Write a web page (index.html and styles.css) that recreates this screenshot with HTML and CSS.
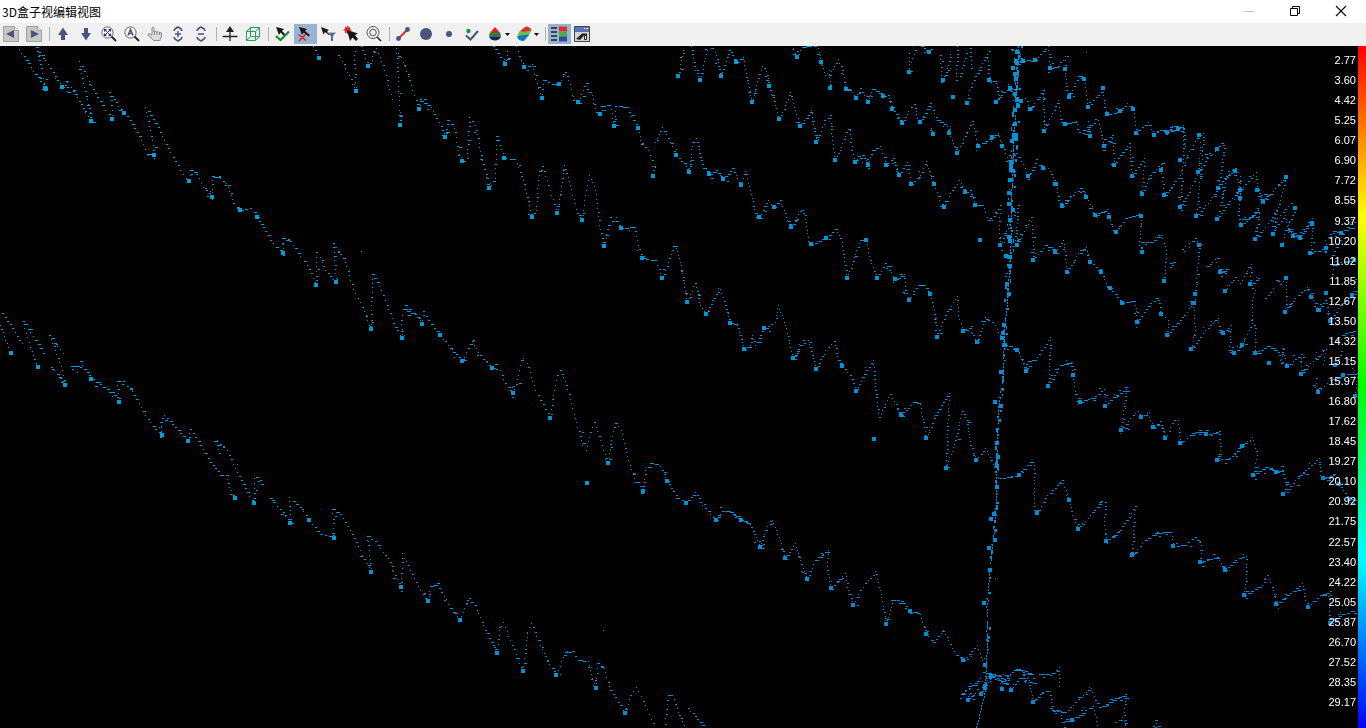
FILE: index.html
```html
<!DOCTYPE html>
<html lang="zh-CN">
<head>
  <meta charset="UTF-8" />
  <meta name="viewport" content="width=device-width, initial-scale=1.0"/>
  <title>3D盒子视编辑视图</title>
  <link rel="stylesheet" href="styles.css">
</head>
<body>

  <header class="titlebar">
    <h1>3D盒子视编辑视图</h1>
    <div class="window-buttons">
      <button type="button" aria-label="最小化" disabled>
        <svg viewBox="0 0 12 12"><path d="M1 6.500h10" stroke="#c4c4c4"/></svg>
      </button>
      <button type="button" aria-label="还原">
        <svg viewBox="0 0 12 12"><path d="M1.500 3.500h7v7h-7zM3.500 3.500v-2h7v7h-2" fill="none" stroke="#000"/></svg>
      </button>
      <button type="button" aria-label="关闭">
        <svg viewBox="0 0 12 12"><path d="M1 1l10 10M11 1L1 11" stroke="#000" stroke-width="1.100"/></svg>
      </button>
    </div>
  </header>

  <nav class="toolbar" aria-label="工具栏">
    <button type="button" aria-label="上一个">
      <svg viewBox="0 0 16 16"><path d="M.5.500h11l4 4v11H.5z" fill="#c6c6c6" stroke="#a2a2a2"/><path d="M11.500.500v4h4" fill="#eee" stroke="#a2a2a2"/><path d="M11 4v8L3 8z" fill="#46557c"/></svg>
    </button>
    <button type="button" aria-label="下一个">
      <svg viewBox="0 0 16 16"><path d="M.5.500h11l4 4v11H.5z" fill="#c6c6c6" stroke="#a2a2a2"/><path d="M11.500.500v4h4" fill="#eee" stroke="#a2a2a2"/><path d="M5 4v8l8-4z" fill="#46557c"/></svg>
    </button>
    <span class="separator"></span>
    <button type="button" aria-label="向上">
      <svg viewBox="0 0 16 16"><path d="M8 1.500L13 9h-3v5H6V9H3z" fill="#46557c"/></svg>
    </button>
    <button type="button" aria-label="向下">
      <svg viewBox="0 0 16 16"><path d="M8 14.500L13 7h-3V2H6v5H3z" fill="#46557c"/></svg>
    </button>
    <button type="button" aria-label="全部显示">
      <svg viewBox="0 0 16 16"><circle cx="6.500" cy="6.500" r="5.600" fill="#f6f6f6" stroke="#666"/><path d="M10.500 10.500l4.500 4.500" stroke="#222" stroke-width="1.800"/><path d="M4 4l5 5M9 4L4 9" stroke="#2a2a80"/><path d="M3 3h3L3 6zM10 3v3L7 3zM3 10V7l3 3zM10 10H7l3-3z" fill="#2a2a80"/></svg>
    </button>
    <button type="button" aria-label="自动缩放">
      <svg viewBox="0 0 16 16"><circle cx="6.500" cy="6.500" r="5.600" fill="#f6f6f6" stroke="#666"/><path d="M10.500 10.500l4.500 4.500" stroke="#222" stroke-width="1.800"/><path d="M4 9.500l2.500-6 2.500 6M5 7.500h3" fill="none" stroke="#46557c" stroke-width="1.500"/></svg>
    </button>
    <button type="button" aria-label="平移">
      <svg viewBox="0 0 16 16"><path d="M5 9V2.500Q5 1 6 1t1 1.500V6l1-1 1.500 1L11 5.500 12 6.500l2.500.5v4L13 13.500v1H6.500L5 12.500 1 9Q1 7 3 8z" fill="#dcdcdc" stroke="#8a8a8a"/><path d="M7.500 6v3M10 6v3M12.500 7v2" stroke="#888"/></svg>
    </button>
    <button type="button" aria-label="放大">
      <svg viewBox="0 0 16 16"><path d="M4 5q0-2 4-4q4 2 4 4M4 11q0 2 4 4q4-2 4-4M5 8h6M8 5v6" fill="none" stroke="#46557c" stroke-width="1.500"/></svg>
    </button>
    <button type="button" aria-label="缩小">
      <svg viewBox="0 0 16 16"><path d="M4 5q0-2 4-4q4 2 4 4M4 11q0 2 4 4q4-2 4-4M5 8h6" fill="none" stroke="#46557c" stroke-width="1.500"/></svg>
    </button>
    <span class="separator"></span>
    <button type="button" aria-label="移动剖面">
      <svg viewBox="0 0 16 16"><path d="M8 4v11M.5 10.500h15" stroke="#222" stroke-width="1.300"/><path d="M8 0l4 6H4z" fill="#222"/></svg>
    </button>
    <button type="button" aria-label="立方体">
      <svg viewBox="0 0 16 16"><path d="M1.500 5.500h9v9h-9zM5.500 1.500h9v9h-9zM1.500 5.500l4-4M10.500 5.500l4-4M10.500 14.500l4-4M1.500 14.500l4-4" fill="none" stroke="#23a35a"/></svg>
    </button>
    <span class="separator"></span>
    <button type="button" aria-label="接受点">
      <svg viewBox="0 0 16 16"><path d="M2 1l8 2-2 2 4 4-1.500 1.500-4-4L5 9z" fill="#161616"/><path d="M2 10l4.500 4L15 5.500" fill="none" stroke="#1f8a35" stroke-width="2.200"/></svg>
    </button>
    <button type="button" class="active" aria-label="拒绝点" aria-pressed="true">
      <svg viewBox="0 0 16 16"><path d="M2 1l8 2-2 2 5 4-1.500 1.500-5-4L5 9z" fill="#161616"/><path d="M1.500 8.500l7.500 6M9 8l-7 7" stroke="#d8262c" stroke-width="1.600"/></svg>
    </button>
    <button type="button" aria-label="过滤选择">
      <svg viewBox="0 0 16 16"><path d="M1 1l8 3-2 1 3 3-1 1-4-3-1.500 2.500z" fill="#161616"/><path d="M7 6.500h9L13 10v5h-2v-5z" fill="#5a6a8c"/><path d="M7.500 6.500h8" stroke="#b7c0d2"/></svg>
    </button>
    <button type="button" aria-label="选择点">
      <svg viewBox="0 0 16 16"><circle cx="4.500" cy="4" r="3" fill="#e22a2a"/><path d="M4.500 0v8M.5 4h8M2 1l5 6M7 1L2 7" stroke="#e22a2a"/><path d="M4 4l11 3.500-3 1.500 3 4-2 2-3.500-3.500L7 15z" fill="#161616"/></svg>
    </button>
    <button type="button" aria-label="查询">
      <svg viewBox="0 0 16 16"><circle cx="7" cy="6.500" r="6" fill="none" stroke="#555"/><circle cx="7" cy="6.500" r="3.300" fill="none" stroke="#555"/><path d="M11 11l4 4" stroke="#222" stroke-width="1.600"/></svg>
    </button>
    <span class="separator"></span>
    <button type="button" aria-label="测线">
      <svg viewBox="0 0 16 16"><path d="M3.500 12.500l9-9" stroke="#e02626" stroke-width="1.800"/><circle cx="3.500" cy="12.500" r="2.400" fill="#46557c"/><circle cx="12.500" cy="3.500" r="2.400" fill="#46557c"/></svg>
    </button>
    <button type="button" aria-label="大点">
      <svg viewBox="0 0 16 16"><circle cx="8" cy="8" r="6" fill="#46557c"/></svg>
    </button>
    <button type="button" aria-label="小点">
      <svg viewBox="0 0 16 16"><circle cx="8" cy="8" r="3" fill="#46557c"/></svg>
    </button>
    <button type="button" aria-label="已接受的点">
      <svg viewBox="0 0 16 16"><circle cx="4.500" cy="5" r="2.200" fill="#0f9c43"/><path d="M2 9.500l4.500 4L14 5" fill="none" stroke="#46557c" stroke-width="2"/></svg>
    </button>
    <button type="button" class="dropdown" aria-label="着色方式">
      <svg viewBox="0 0 16 16"><path d="M8 1L2.800 7h10.400z" fill="#dc2323"/><path d="M2.800 7Q2 8.500 2.200 11h11.600Q14 8.500 13.200 7z" fill="#0c8a43"/><path d="M2.200 11Q4 14.500 8 14.500t5.800-3.500z" fill="#2b1770"/></svg>
      <svg class="caret" viewBox="0 0 5 3"><path d="M0 0h5L2.500 3z"/></svg>
    </button>
    <button type="button" class="dropdown" aria-label="曲面">
      <svg viewBox="0 0 16 16"><path d="M5 4l5-3.500Q14 .5 15.500 4l-1 2H4z" fill="#dc3030"/><path d="M3.500 5Q8 7 15.500 4l-3 6Q7 8 1 11z" fill="#6cc04a"/><path d="M1 10.500Q7 8 13 9l-5 6Q2 15 1 10.500z" fill="#1179bd"/></svg>
      <svg class="caret" viewBox="0 0 5 3"><path d="M0 0h5L2.500 3z"/></svg>
    </button>
    <span class="separator"></span>
    <button type="button" class="active" aria-label="显示色标" aria-pressed="true">
      <svg viewBox="0 0 16 16"><path d="M0 2h6M0 6h6M0 10h6M0 14h6" stroke="#1d1d1d" stroke-width="1.600"/><path d="M8 .5h8v5H8z" fill="#dc3030"/><path d="M8 5.500h8v5H8z" fill="#4cae3c"/><path d="M8 10.500h8v5H8z" fill="#334a9c"/></svg>
    </button>
    <button type="button" aria-label="视图设置">
      <svg viewBox="0 0 16 16"><path d="M.5.500h15v15H.5z" fill="#d4d4d4" stroke="#444"/><path d="M1 1h14v5H1z" fill="#5d72b5"/><path d="M10 2.500h1M12 2.500h2" stroke="#fff"/><path d="M2 13l6-5.500h5v2h-3l-4 4.500z" fill="#222"/><path d="M10.500 9.500h2v4h-2z" fill="#fff" stroke="#222"/></svg>
    </button>
  </nav>

  <main class="view">
    <canvas id="cloud" aria-label="点云"></canvas>
    <ol class="depths" id="depths"></ol>
    <div class="color-scale"></div>
  </main>

  <script src="cloud.js"></script>
</body>
</html>
```

FILE: styles.css
```css
* {
  box-sizing: border-box;
}

body {
  margin: 0;
  height: 100vh;
  display: flex;
  flex-direction: column;
  overflow: hidden;
  background-color: #000;
  font-family: 'Liberation Sans', 'Noto Sans CJK SC', sans-serif;
  font-size: 11px;
}

button {
  border: none;
  padding: 0;
  background: none;
}

.titlebar {
  height: 23px;
  flex: none;
  display: flex;
  justify-content: space-between;
  align-items: center;
  padding: 0 2px;
  background-color: #fff;
}

.titlebar h1 {
  margin: 0;
  color: #000;
  font-family: 'Noto Sans CJK SC', sans-serif;
  font-size: 12px;
  font-weight: normal;
  line-height: 20px;
}

.window-buttons {
  display: flex;
  height: 22px;
}

.window-buttons button {
  width: 46px;
  padding-bottom: 2px;
  display: flex;
  justify-content: center;
  align-items: center;
}

.window-buttons svg {
  width: 12px;
  height: 12px;
}

.toolbar {
  height: 23px;
  flex: none;
  display: flex;
  background-color: #f0f0f0;
}

.toolbar button {
  width: 23px;
  height: 20px;
  margin-top: 1px;
  padding-right: 1px;
  display: flex;
  justify-content: center;
  align-items: center;
}

.toolbar svg {
  width: 16px;
  height: 16px;
}

.toolbar .active {
  background-color: #99b4d1;
}

.toolbar .dropdown {
  width: 29px;
  gap: 2px;
}

.toolbar .caret {
  width: 5px;
  height: 3px;
}

.separator {
  width: 1px;
  height: 14px;
  margin: 4px 2px 0 3px;
  background-color: #b4b4b4;
}

.view {
  flex: 1;
  min-height: 0;
  display: grid;
  grid-template-columns: 1fr auto 8px;
  grid-template-rows: 100%;
}

#cloud {
  grid-area: 1 / 1 / 2 / 4;
  width: 100%;
  height: 100%;
}

/* the labels and the scale share the grid row with the canvas */
.depths {
  grid-area: 1 / 2;
  margin: 0;
  padding: 4px 2px 16px 0;
  list-style: none;
  display: flex;
  flex-direction: column;
  justify-content: space-between;
  color: #fff;
  text-align: right;
  line-height: 20px;
  z-index: 1;
}

.color-scale {
  grid-area: 1 / 3;
  background: linear-gradient(#f00, #ff0, #0f0, #0ff, #00f);
  z-index: 1;
}
```

FILE: cloud.js
```js
// Sounding profiles, "x,y" per vertex. A * marks a picked sounding.
const profiles = [
  '2,313 10,324 17,336 24,346',
  '0,325 4,336 8,347 11,353*',
  '38,367* 34,359 29,342 24,328 23,321 30,332 40,348 46,357',
  '51,367 57,374 65,385* 62,370 55,350 49,335 57,346 66,356',
  '71,366 80,367 77,372 80,361 91,379* 100,384 110,392 117,397 119,402* 117,381 127,386 132,391 145,415 155,429 162,435* 160,422 164,415 175,427 183,436 188,441* 190,429 200,445 210,462 220,475 224,477',
  '235,498* 229,487 225,470',
  '217,440 219,453 216,441 227,450 235,468 247,492 254,503* 254,478 265,487',
  '270,498 280,509 290,523* 289,497 300,507 309,520* 320,534 334,538* 332,509 340,514 350,530 360,550 371,572* 369,555 367,536 375,541 390,562 395,575 401,587* 402,553 410,570 420,590 428,601* 430,586 437,583 450,608 460,620* 467,600 475,605 485,630 497,653* 499,630 503,622 512,645 523,671* 527,632 531,623 540,645 547,660 556,675* 565,652 572,651 578,660 588,661 592,678 596,688* 597,663 604,668 610,690 625,713* 630,695 636,687 645,705 655,728',
  '664,728 668,695 672,695 678,712 685,728', '688,708 695,716 704,728',

  '19,49 26,60 35,74 45,88* 41,68 36,47 45,60 55,76 62,87* 67,82 67,91 71,87 77,97 85,112 91,121* 89,108 82,78 79,61 84,71 89,81 97,97 105,110 112,119* 111,100 109,92 118,106 124,113* 130,120 141,140 147,154 154,155* 152,140 145,107 153,119 162,136 170,152 180,170 189,181* 190,170 197,174 203,187 212,197* 212,176 220,178 226,183 234,203 240,210* 250,208 257,217* 263,227 270,240 276,247 283,253* 282,238 290,241 300,256 307,265 313,278 316,285* 316,252 320,257 325,270 330,276 336,282* 333,243 345,262 353,289 362,307 371,329* 371,310 372,274 379,286 385,300 395,327 402,338* 401,320 403,309 415,314 422,324* 423,311 431,324 440,335* 450,348 462,361* 468,348 472,341 480,355 492,368* 500,370 505,383 513,393* 518,375 521,360 527,363 535,390 540,400 550,418* 553,395 557,375 560,370 566,385 575,418 582,445 586,450 590,432 594,422 600,440 608,463* 611,440 615,423 621,430 628,460 636,482 643,491* 645,470 650,463 660,466 667,481* 673,491 678,498 686,503* 695,492 702,505 716,520* 722,511 730,512 741,520* 750,524 760,547* 765,530 772,520 780,540 785,558* 795,543 800,560 807,579* 815,560 828,550 827,570 831,588* 845,573 848,590 853,605* 860,590 875,571 880,590 886,624* 893,600 901,601 910,611* 920,614 926,634* 933,642 943,630 952,648 956,655 963,660* 977,645 982,660 985,665*',

  '313,46 319,58*', '340,57 347,72 356,91* 354,60 355,46', '361,46 368,66* 372,60 373,46', '376,48 383,65 388,85 393,103',
  '400,125* 399,100 396,48 405,66 412,90 416,100 419,109* 420,101 431,107 436,118 441,126 445,137* 447,120 454,128 458,150 462,161* 467,158 469,117 475,125 482,160 489,188* 495,178 496,140 498,140 504,158* 515,159 523,180 530,210 532,217* 536,210 538,180 542,166 550,190 557,213* 560,195 564,165 570,185 577,213 582,220* 585,195 589,175 595,190 599,225 604,246* 608,225 616,217 621,228* 634,227 638,245 642,258* 655,260 662,278* 668,262 673,246 676,248 680,262 687,302* 695,283 700,305 706,314* 712,300 720,289 725,305 730,323* 737,325 744,349* 750,345 752,335 755,345 764,328* 775,322 778,305 785,325 793,358* 800,345 808,340 816,369* 825,350 834,341 838,360 842,366* 850,375 856,391* 862,377 873,360 875,390 879,417 890,394 901,415* 913,402 920,404 926,438* 935,415 949,393 947,430 946,468* 955,440 962,411 967,420 970,445 976,460* 985,448 991,460 997,475',
  '1000,478 1010,477 1019,475* 1030,462 1034,465 1034,510 1037,513* 1047,495 1062,480 1069,500* 1072,515 1078,529* 1090,515 1101,501 1105,502 1104,525 1106,541* 1120,530 1135,506 1133,530 1132,555* 1145,540 1155,533 1171,532 1173,546* 1185,545 1195,537 1201,545 1200,562* 1217,557 1225,570* 1235,560 1246,556 1246,578 1244,595* 1262,585 1267,575 1273,590 1276,604* 1290,593 1302,583 1305,600 1308,607* 1320,595 1330,591 1329,615 1330,623* 1342,614 1351,611 1357,615',

  '493,46 500,57 505,64* 508,46', '516,46 521,60 524,67* 532,64 534,74 538,88 542,98* 543,80 552,84 559,84* 565,72 571,89 573,100 578,102* 584,86 592,95 596,112 600,114* 603,106 610,105 614,126* 615,106 627,107 633,120 638,128* 641,144 648,150 652,160 653,176*',
  '655,142 662,127 670,142 676,155* 684,163 689,172* 692,142 696,138 702,164 709,174* 716,170 723,179* 732,168 741,185* 745,171 750,190 755,213 759,217* 768,200 774,207* 780,200 787,220 791,227* 800,211 805,215 808,241 811,244* 826,238* 835,229 841,238 845,265 847,278* 860,240 866,240* 870,260 877,278* 885,263 895,279* 904,274 905,290 909,300* 918,285 924,285 930,294* 934,310 937,337* 945,315 957,296 958,315 963,331* 969,328 977,342* 985,317 995,325 1005,345* 1017,350* 1022,360 1026,371* 1028,361 1035,360 1050,337 1049,370 1048,386* 1060,365 1071,362 1073,375* 1075,394 1080,402* 1095,396 1104,389 1105,406* 1113,397 1126,389 1123,410 1121,430* 1130,418 1138,411 1141,417* 1147,413 1153,427* 1160,421 1165,438* 1174,420 1178,420 1180,443* 1190,435 1199,430 1206,434* 1219,431 1220,450 1217,460* 1229,458 1242,446* 1252,437 1257,455 1253,475* 1265,467 1276,472* 1282,470 1286,485 1283,494* 1300,475 1319,458 1320,475 1323,478* 1333,475 1339,484* 1349,499* 1357,501',

  '678,76* 681,60 684,46', '691,46 695,70 700,80* 705,58 708,46', '711,48 715,52 721,76* 729,50 732,55 736,62* 743,57 747,80 752,102* 758,78 762,66 766,71 769,86* 775,105 779,119* 785,105 790,92 795,110 800,126* 808,115 811,110 815,135 816,142* 825,120 830,115 832,140 835,160* 840,150 846,132 850,130 852,150 855,162* 862,155 868,165* 872,150 880,146 886,165* 893,158 899,175* 907,162 911,184* 920,175 926,161 930,175 934,184* 939,200 944,207* 952,190 959,180 965,192* 970,190 975,205* 982,205 988,220 992,220 1000,205 999,225 1000,245* 1008,228 1018,205 1016,230 1017,245* 1031,217 1033,245 1033,260* 1045,245 1055,252* 1063,240 1065,255 1067,272* 1080,250 1086,247 1090,262* 1101,272* 1107,287 1110,288* 1122,303* 1135,301 1137,322* 1150,303 1158,300 1161,314* 1168,320 1167,335* 1180,320 1193,303* 1195,330 1191,349* 1205,330 1218,318 1219,330 1223,333* 1231,325 1229,350 1234,353* 1242,345* 1252,323 1255,328 1255,353* 1267,346 1278,352 1281,363 1282,348 1287,366* 1301,354 1301,374* 1315,358 1326,349 1322,368',
  '1316,378 1315,387 1318,392* 1330,380 1343,375* 1357,373 1355,396*',

  '793,49 797,57* 802,47 814,46 818,48 821,62* 825,75 829,70 830,88*', '829,75 838,59 842,70 846,89* 852,92 856,98* 860,88 868,102* 872,89 883,96* 888,95 892,109* 902,123* 908,111 914,104 918,121 920,122* 930,103 937,120 947,126 949,133* 957,153* 965,136 972,121 978,146* 992,137* 998,133 1002,146* 1008,160 1016,153 1023,164 1028,176* 1035,163 1043,168* 1048,168 1054,180 1056,184* 1058,200 1062,206* 1070,197 1080,188 1086,197* 1095,215* 1107,209 1109,217* 1113,230 1116,232* 1125,218 1139,213 1141,216* 1139,245 1142,252*',
  '931,128 933,134*', '1141,242 1150,242 1161,235 1166,250 1164,281*', '1170,263 1176,260', '1182,249 1195,238 1199,245* 1197,270 1195,294* 1194,303*', '1207,266 1215,259 1220,272* 1229,268', '1225,291* 1235,277 1240,283 1251,264 1250,284*', '1265,298 1275,285', '1276,280 1280,284 1286,278* 1286,300 1285,312* 1295,298 1307,287 1311,297* 1319,310* 1325,300 1330,321* 1340,305 1352,295* 1356,275', '1250,285 1261,275', '1252,323 1252,300 1256,286',

  '909,72* 909,50', '911,62 916,46', '921,46 929,52* 933,46', '940,55 941,79 943,80* 948,65 951,50', '957,46 956,80 960,76 967,50', '970,48 971,72',
  '967,103* 969,90 977,73 987,54 989,80* 996,83 998,98 996,102* 1003,92 1010,88* 1020,90',
  '1008,84 1015,100 1021,101* 1025,98 1030,109* 1043,90 1044,131* 1051,116 1058,100 1061,122 1065,124* 1076,121 1079,132 1090,136* 1088,118',
  '1083,130 1090,125 1098,120 1104,146* 1112,135 1114,165* 1120,155 1129,143 1132,176* 1144,158 1142,194* 1150,175 1161,164 1161,170* 1164,195* 1180,175 1187,155 1199,135* 1203,133 1202,155 1196,216* 1210,200 1218,188* 1224,178 1235,171* 1240,190 1238,215 1241,225* 1249,218 1258,210 1259,216 1255,239* 1270,220 1276,210 1273,234*',

  '1012,50 1023,61* 1035,60* 1048,46 1050,68* 1058,66 1065,56 1065,69* 1066,90 1069,97* 1078,76 1084,79* 1088,107* 1103,88* 1104,107 1107,114* 1120,111* 1127,103 1133,109* 1136,133* 1148,122 1154,135* 1160,130 1167,132* 1178,129* 1183,125 1183,155 1180,207* 1192,185 1198,172* 1200,150 1199,135', '1170,127 1177,126 1183,128 1185,150',
  '1198,172 1207,158 1217,149* 1221,143 1224,148 1218,188*', '1217,219* 1229,201 1240,190* 1256,172 1257,190* 1263,201* 1275,188 1286,177* 1280,200 1272,225', '1217,180 1224,190 1220,205 1226,176 1235,168 1240,176 1240,198*', '1245,219 1259,210', '1264,194 1258,196 1262,202 1269,196',
  '1273,234* 1277,218 1291,203 1295,208* 1288,225 1293,236* 1300,238* 1312,218 1312,224* 1311,245 1310,253* 1326,248* 1325,240 1333,231 1341,233* 1350,224 1357,219', '1282,245* 1285,230 1300,236 1310,219', '1274,230 1285,215 1289,236', '1332,278 1333,265 1340,262 1354,260*', '1330,258 1345,230 1357,226', '1335,340 1345,333 1357,330', '1335,365* 1343,348', '1350,360 1355,380',

  '960,698 965,690 970,683 968,700* 975,693 978,685', '962,693 972,685 980,678 985,688* 991,676* 1003,674 1001,686 1002,689*', '981,694* 988,676 1008,684 1011,690* 1019,678 1028,677 1033,702* 1042,692 1050,691 1052,710 1060,711 1062,722 1072,720* 1085,710 1093,706 1098,728', '1005,680 1014,670 1020,669 1023,674 1032,674 1033,683 1024,681 1030,676', '1039,674 1050,675 1059,667 1059,690', '1053,711 1065,712 1080,697 1091,688 1095,700 1099,707 1112,700 1125,694 1124,715 1126,728', '983,672 995,675 1004,679 1016,669 1030,674', '1115,722 1122,717 1127,728', '1149,728 1156,723 1160,728',
];

const trunk = '1018,46 1016,100 1013,150 1011,200 1010,240 1008,290 1004,330 1003,370 998,410 997,450 996,490 995,520 990,565 987,600 987,640 985,690 976,728';

const picked = '46,89 587,483 874,439 953,97 980,240 1055,184 1180,160 1318,310 1326,293 1269,363 ' +
  '1017,52 1016,61 1017,63 1013,68 1015,74 1016,79 1015,94 1017,99 1018,106 1015,110 1015,124 1014,135 1012,141 1016,139 ' +
  '1011,162 1011,166 1011,170 1013,171 1010,180 1009,193 1009,204 1013,210 1010,220 1009,237 1010,241 1006,256 1010,257 1010,266 1007,284 1009,294 ' +
  '1004,325 1003,333 1002,338 1004,345 1001,372 995,402 1001,406 997,443 998,457 997,466 997,487 994,514 991,519 995,540 989,548 990,570 984,603 985,686';

const canvas = document.getElementById('cloud');
const ctx = canvas.getContext('2d');

let seed = 7;
function random() {
  seed = (seed * 16807) % 2147483647;
  return seed / 2147483647;
}

function parse(text) {
  return text.split(' ').map(p => {
    const [x, y] = p.replace('*', '').split(',').map(Number);
    return { x, y, mark: p.endsWith('*') };
  });
}

function block(x, y, w, h) {
  ctx.fillStyle = `rgb(0, ${Math.round(166 - x / 60 - y / 60)}, 216)`;
  ctx.fillRect(Math.round(x), Math.round(y), w, h);
}

function drawProfile(points) {
  points.forEach((p, i) => {
    if (p.mark) block(p.x - 2, p.y - 2, 4, 4);
    if (i === 0) return;
    const from = points[i - 1];
    const dx = p.x - from.x;
    const dy = p.y - from.y;
    const rising = dy < 0;
    const slope = Math.abs(dy) / (Math.abs(dx) || 1);
    // the left-hand lines are closer to the eye and more widely spaced
    const gap = p.x < 680 ? 4.6 : 3.8;
    const n = Math.max(1, Math.round(Math.hypot(dx, dy) / gap));
    for (let k = 0; k < n; k++) {
      const x = from.x + dx * k / n;
      const y = from.y + dy * k / n + random() - 0.5;
      let w = 1 + Math.round(random() * 0.7);
      if (slope < 2) w = 1 + Math.round(random() * 2);
      if (slope < 0.8) w = 2 + Math.round(random() * 3);
      block(x, y, w, 1);
      // flat stretches and the foot of each swing scatter more
      const loose = slope < 1 ? 0.45 : (p.mark && k > n - 4) || (rising && from.mark && k < 3) ? 0.4 : 0.07;
      if (random() < loose) {
        block(x + (random() - 0.5) * 5, y + (random() - 0.5) * 9, 1 + Math.round(random() * 2), 1);
      }
    }
  });
}

function drawTrunk(points) {
  for (let i = 1; i < points.length; i++) {
    const a = points[i - 1];
    const b = points[i];
    for (let y = a.y; y < b.y; y += 3) {
      const x = a.x + (b.x - a.x) * (y - a.y) / (b.y - a.y);
      if (random() < 0.85) block(x, y, 1, 2);
      const spread = y < 300 ? 7 : 4;
      if (random() < (y < 300 ? 0.9 : 0.5) && y < 690) {
        block(x + (random() - 0.5) * spread, y, 1 + Math.round(random()), 1 + Math.round(random() * 3));
      }
    }
  }
}

function draw() {
  seed = 7;
  canvas.width = canvas.clientWidth;
  canvas.height = canvas.clientHeight;
  ctx.translate(0, -canvas.offsetTop);
  profiles.forEach(text => drawProfile(parse(text)));
  drawTrunk(parse(trunk));
  parse(picked).forEach(p => block(p.x - 2, p.y - 2, 4, 4));
  ['603,630', '361,251', '1086,52', '995,578'].forEach(text => {
    const [p] = parse(text);
    block(p.x, p.y, 1, 1);
  });
}

const depths = document.getElementById('depths');
for (let i = 0; i < 33; i++) {
  const li = document.createElement('li');
  li.textContent = (2.7741 + i * 0.825).toFixed(2);
  depths.appendChild(li);
}

draw();
window.addEventListener('resize', draw);
```
